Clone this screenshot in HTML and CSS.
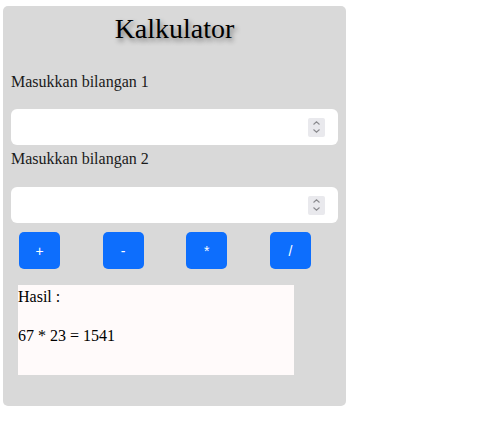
FILE: index.html
```html
<!DOCTYPE html>
<html lang="id">
<head>
<meta charset="utf-8">
<title>Kalkulator</title>
<link rel="stylesheet" href="styles.css">
</head>
<body>
<div class="calc">
  <h1 class="title">Kalkulator</h1>
  <label class="label" for="a">Masukkan bilangan 1</label>
  <div class="field">
    <input class="input" id="a" type="text">
    <span class="spin"><svg width="9" height="14" viewBox="0 0 9 14"><path d="M1.5 4.5 L4.5 1.8 L7.5 4.5" fill="none" stroke="#8a8a8e" stroke-width="1.1"/><path d="M1.5 9.5 L4.5 12.2 L7.5 9.5" fill="none" stroke="#8a8a8e" stroke-width="1.1"/></svg></span>
  </div>
  <label class="label" for="b">Masukkan bilangan 2</label>
  <div class="field">
    <input class="input" id="b" type="text">
    <span class="spin"><svg width="9" height="14" viewBox="0 0 9 14"><path d="M1.5 4.5 L4.5 1.8 L7.5 4.5" fill="none" stroke="#8a8a8e" stroke-width="1.1"/><path d="M1.5 9.5 L4.5 12.2 L7.5 9.5" fill="none" stroke="#8a8a8e" stroke-width="1.1"/></svg></span>
  </div>
  <div class="ops">
    <button class="btn">+</button>
    <button class="btn">-</button>
    <button class="btn">*</button>
    <button class="btn">/</button>
  </div>
  <div class="result">
    <div class="res-label">Hasil :</div>
    <div class="res-value">67 * 23 = 1541</div>
  </div>
</div>
</body>
</html>
```
FILE: styles.css
```css
body {
  margin: 0;
  background: #ffffff;
  font-family: "Liberation Serif", "Times New Roman", serif;
  font-size: 16px;
  color: #000;
}
.calc {
  margin: 6px 0 0 3px;
  width: 343px;
  height: 400px;
  box-sizing: border-box;
  padding: 0 8px;
  background: #d9d9d9;
  border-radius: 5px;
  display: flex;
  flex-direction: column;
}
.title {
  margin: 7px 0 0;
  font-size: 28px;
  font-weight: normal;
  line-height: 32px;
  text-align: center;
  text-shadow: 2px 3px 5px rgba(0,0,0,0.45);
}
.label {
  display: block;
  line-height: 18px;
  margin-top: 28px;
  margin-bottom: 18px;
  color: #1a1a1a;
}
.field + .label {
  margin-top: 5px;
  margin-bottom: 19px;
}
.field {
  display: flex;
  align-items: center;
  height: 36px;
  background: #fff;
  border-radius: 6px;
  padding: 0 13px 0 8px;
}
.input {
  flex: 1;
  min-width: 0;
  border: none;
  outline: none;
  background: transparent;
  font-size: 16px;
  height: 30px;
  padding: 0;
}
.spin {
  width: 17px;
  height: 19px;
  background: #e9e9ed;
  border-radius: 2px;
  display: flex;
  align-items: center;
  justify-content: center;
}
.ops {
  display: flex;
  gap: 42.67px;
  padding-left: 8px;
  margin-top: 9px;
}
.btn {
  width: 41px;
  height: 37px;
  border: none;
  border-radius: 5px;
  background: #0d6efd;
  color: #fff;
  font-family: "Liberation Sans", Arial, sans-serif;
  font-size: 14px;
  padding: 0;
}
.result {
  margin: 16px 0 0 7px;
  width: 276px;
  height: 90px;
  box-sizing: border-box;
  background: #fffafa;
  padding-top: 3px;
}
.res-label {
  line-height: 18px;
}
.res-value {
  line-height: 18px;
  margin-top: 21px;
}
```
